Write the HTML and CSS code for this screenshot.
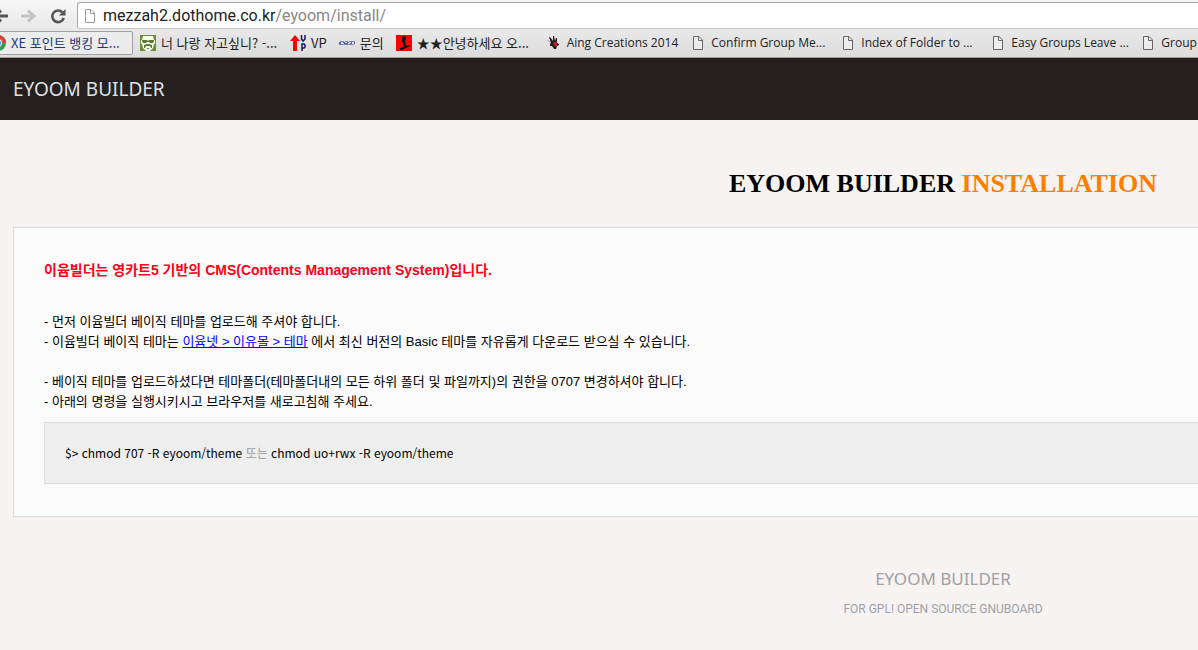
FILE: index.html
```
<!DOCTYPE html>
<html lang="ko">

<head>
    <meta charset="UTF-8" />
    <meta name="viewport" content="width=device-width, initial-scale=1.0" />
    <title>EYOOM BUILDER INSTALLATION</title>
    <link rel="stylesheet" href="styles.css">
</head>

<body>
    <!-- Page icon shared by the address bar and the bookmarks -->
    <svg class="sprite" aria-hidden="true">
        <symbol id="icon-page" viewBox="0 0 12 16">
            <path d="M1.5 1.5h5.500l3.500 3.500v9.500h-9z" fill="#fff" fill-opacity=".4" stroke="currentColor" />
            <path d="M6.500 1.500v4h4" fill="none" stroke="currentColor" />
        </symbol>
    </svg>

    <div class="browser">
        <div class="toolbar">
            <button type="button" class="tool back" aria-label="Back">
                <svg width="16" height="16" viewBox="0 0 16 16" aria-hidden="true">
                    <path d="M16 8H4M9 2.500L3 8l6 5.500" fill="none" stroke="#555" stroke-width="3" />
                </svg>
            </button>
            <button type="button" class="tool forward" aria-label="Forward">
                <svg width="16" height="16" viewBox="0 0 16 16" aria-hidden="true">
                    <path d="M1 8h12M8 2.500L14 8l-6 5.500" fill="none" stroke="#c4c4c4" stroke-width="3" />
                </svg>
            </button>
            <button type="button" class="tool reload" aria-label="Reload">
                <svg width="16" height="16" viewBox="0 0 16 16" aria-hidden="true">
                    <path d="M12.500 4.500A5.800 5.800 0 1 0 13.700 9.800" fill="none" stroke="#555" stroke-width="2.600" />
                    <path d="M15.500 1v6.500H9z" fill="#555" />
                </svg>
            </button>
            <div class="address">
                <svg class="page-icon" aria-hidden="true"><use href="#icon-page" /></svg>
                <span><b>mezzah2.dothome.co.kr</b>/eyoom/install/</span>
            </div>
        </div>

        <nav class="bookmarks" aria-label="Bookmarks">
            <a href="#" class="korean active">
                <svg class="favicon" viewBox="0 0 16 16" aria-hidden="true">
                    <circle cx="8" cy="8" r="8" fill="#2e9e4f" />
                    <path d="M0 8a8 8 0 0 1 16 0z" fill="#dd4337" />
                    <circle cx="8" cy="8" r="4" fill="#fff" />
                    <circle cx="8" cy="8" r="3" fill="#4a86d8" />
                </svg>
                XE 포인트 뱅킹 모...
            </a>
            <a href="#" class="korean cut">
                <svg class="favicon" viewBox="0 0 16 16" aria-hidden="true">
                    <path d="M0 0h16v16H0z" fill="#6b8c3a" />
                    <path d="M3 1h10l1 4h1v4h-1l-1 4-3 3H6l-3-3-1-4H1V5h1z" fill="#f8f9ec" />
                    <path d="M2 5h5l1 1 1-1h5v1l-1 2h-3L9 7H7L6 8H3L2 6zM4 10l3-1h2l3 1v3h-1l-1-2H6l-1 2H4zM7 13h2v1H7z" fill="#5b7a30" />
                </svg>
                너 나랑 자고싶니? -...
            </a>
            <a href="#" class="korean">
                <svg class="favicon" viewBox="0 0 16 16" aria-hidden="true">
                    <path d="M5 0l5 6H7v10H3V6H0z" fill="#f00" />
                    <path d="M11.500 0v4l1.500 2 2-2V0M12 16V9h2l1 1v2l-1 1h-2" fill="none" stroke="#1b1464" stroke-width="1.500" />
                </svg>
                VP
            </a>
            <a href="#" class="korean">
                <svg class="favicon" viewBox="0 0 16 16" aria-hidden="true">
                    <path d="M1 6.500h4M6 6.500h3M10 6.500h6M0 9.500h15" stroke="#7a84be" fill="none" />
                    <path d="M0 7.500h2M4 7.500h2M8 7.500h2M12 7.500h1M15 7.500h1M0 8.500h2M5 8.500h4M11 8.500h2M15 8.500h1" stroke="#5361a8" fill="none" />
                </svg>
                문의
            </a>
            <a href="#" class="korean cut">
                <svg class="favicon" viewBox="0 0 16 16" aria-hidden="true">
                    <path d="M0 0h16v16H0z" fill="#f00" />
                    <path d="M6 2l2-1 2 1v2L9 5l1 6 4-1v1l-8 4H4v-2l4-1-2-6z" fill="#111" />
                </svg>
                ★★안녕하세요 오...
            </a>
            <a href="#">
                <svg class="favicon" viewBox="0 0 16 16" aria-hidden="true">
                    <path d="M1 5l2 1 2 2-2-6h1l3 4V1h1l1 5 1-3h1v5l2 1v1l-2 1-1 3H8l-2-3-2 0V9l1-1z" fill="#2b1a1e" />
                    <path d="M7 7h4v4H8z" fill="#a02a20" />
                </svg>
                Aing Creations 2014
            </a>
            <a href="#" class="cut"><svg class="favicon" aria-hidden="true"><use href="#icon-page" /></svg>Confirm Group Me...</a>
            <a href="#" class="cut"><svg class="favicon" aria-hidden="true"><use href="#icon-page" /></svg>Index of Folder to ...</a>
            <a href="#" class="cut"><svg class="favicon" aria-hidden="true"><use href="#icon-page" /></svg>Easy Groups Leave ...</a>
            <a href="#"><svg class="favicon" aria-hidden="true"><use href="#icon-page" /></svg>Group</a>
        </nav>
    </div>

    <!-- The page is wider than the window and runs off its right edge -->
    <div class="viewport">
        <div class="page">
            <header class="site-header">EYOOM BUILDER</header>

            <main>
                <h1>EYOOM BUILDER <span>INSTALLATION</span></h1>

                <section class="box">
                    <h2>이윰빌더는 영카트5 기반의 CMS(Contents Management System)입니다.</h2>
                    <p>
                        - 먼저 이윰빌더 베이직 테마를 업로드해 주셔야 합니다.<br>
                        - 이윰빌더 베이직 테마는 <a href="#">이윰넷 &gt; 이유몰 &gt; 테마</a> 에서 최신 버전의 Basic 테마를 자유롭게 다운로드 받으실 수 있습니다.
                    </p>
                    <p>
                        - 베이직 테마를 업로드하셨다면 테마폴더(테마폴더내의 모든 하위 폴더 및 파일까지)의 권한을 0707 변경하셔야 합니다.<br>
                        - 아래의 명령을 실행시키시고 브라우저를 새로고침해 주세요.
                    </p>
                    <div class="command">$&gt; chmod 707 -R eyoom/theme <span>또는</span> chmod uo+rwx -R eyoom/theme</div>
                </section>
            </main>

            <footer>
                <strong>EYOOM BUILDER</strong>
                <p>FOR GPL! OPEN SOURCE GNUBOARD</p>
            </footer>
        </div>
    </div>
</body>

</html>
```
FILE: styles.css
```
:root {
    --color-page: #f7f3f2;
    --color-border: #dbdddd;
    --color-highlight: #ff7e00;
    --overflow: 688px;
}

* {
    box-sizing: border-box;
}

body {
    margin: 0;
    background: var(--color-page);
    color: #000;
    font-family: "Liberation Sans", "Noto Sans CJK KR", sans-serif;
    font-size: 13px;
    line-height: 20px;
}

.sprite {
    position: absolute;
    width: 0;
    height: 0;
}

/* Browser toolbar */
.browser {
    overflow: hidden;
    background: linear-gradient(#f6f6f6, #dcdcdc);
    border-bottom: 1px solid #9b9b9b;
}

.toolbar {
    display: flex;
    align-items: center;
    height: 29px;
    padding-top: 2px;
}

.tool {
    width: 28px;
    height: 24px;
    padding: 0;
    border: 0;
    background: none;
}

.tool svg {
    display: block;
    margin: 4px auto;
}

.back {
    margin-left: -14px;
}

.reload {
    margin: 0 5px 0 2px;
}

.address {
    display: flex;
    flex: 1;
    align-items: center;
    gap: 7px;
    height: 27px;
    padding-left: 6px;
    border: 1px solid #a6a6a6;
    border-right: 0;
    border-bottom-color: #c4c4c4;
    border-radius: 3px 0 0 3px;
    background: #fff;
    color: #888;
    font-family: Roboto, sans-serif;
    font-size: 16px;
}

.address b {
    color: #222;
    font-weight: 400;
}

.page-icon {
    flex: none;
    width: 12px;
    height: 16px;
    color: #999;
}

.bookmarks {
    display: flex;
    align-items: center;
    gap: 12px;
    height: 28px;
    margin-left: -10px;
    white-space: nowrap;
}

.bookmarks a {
    display: flex;
    flex: none;
    align-items: center;
    gap: 5px;
    color: #222;
    font-family: "Open Sans", sans-serif;
    font-size: 12px;
    text-decoration: none;
}

.bookmarks .korean {
    font-family: "Noto Sans CJK KR", sans-serif;
    font-size: 13px;
}

/* Long titles are cut to one shared width */
.bookmarks .cut {
    width: 138px;
}

.bookmarks .active {
    width: 149px;
    height: 24px;
    margin: 0 -5px 0 -6px;
    padding-left: 5px;
    border: 1px solid #a0a0a0;
    border-radius: 2px;
    background: #ececec;
    color: #1c3a7a;
}

.favicon {
    flex: none;
    width: 16px;
    height: 16px;
    color: #666;
}

/* Installer page */
.viewport {
    overflow: hidden;
}

.page {
    margin-right: calc(-1 * var(--overflow));
}

.site-header {
    padding: 20px 13px;
    background: #25201e;
    color: #dfe1e5;
    font-family: "Noto Sans", sans-serif;
    font-size: 19px;
    line-height: 22px;
}

main {
    padding: 48px 13px 0;
}

h1 {
    margin: 0 0 28px;
    font-family: "Liberation Serif", serif;
    font-size: 26px;
    line-height: 31px;
    text-align: center;
}

h1 span {
    color: var(--color-highlight);
}

.box {
    padding: 32px 30px;
    border: 1px solid var(--color-border);
    background: #fafafa;
}

.box h2 {
    margin: 0 0 32px;
    color: #ff0018;
    font-size: 14px;
    line-height: 20px;
}

.box p {
    margin: 0 0 20px;
}

.box p + p {
    margin-bottom: 10px;
}

.box a {
    color: #00f;
}

.command {
    padding: 20px;
    border: 1px solid var(--color-border);
    background: #eee;
    font-family: "Noto Sans CJK KR", sans-serif;
    font-size: 12px;
}

.command span {
    color: #999;
}

footer {
    padding: 50px 0 32px;
    color: #9da1a6;
    font-family: "Noto Sans", sans-serif;
    text-align: center;
}

footer strong {
    font-size: 17px;
    font-weight: 400;
    line-height: 24px;
}

footer p {
    margin: 8px 0 0;
    font-family: Roboto, sans-serif;
    font-size: 12px;
}
```
